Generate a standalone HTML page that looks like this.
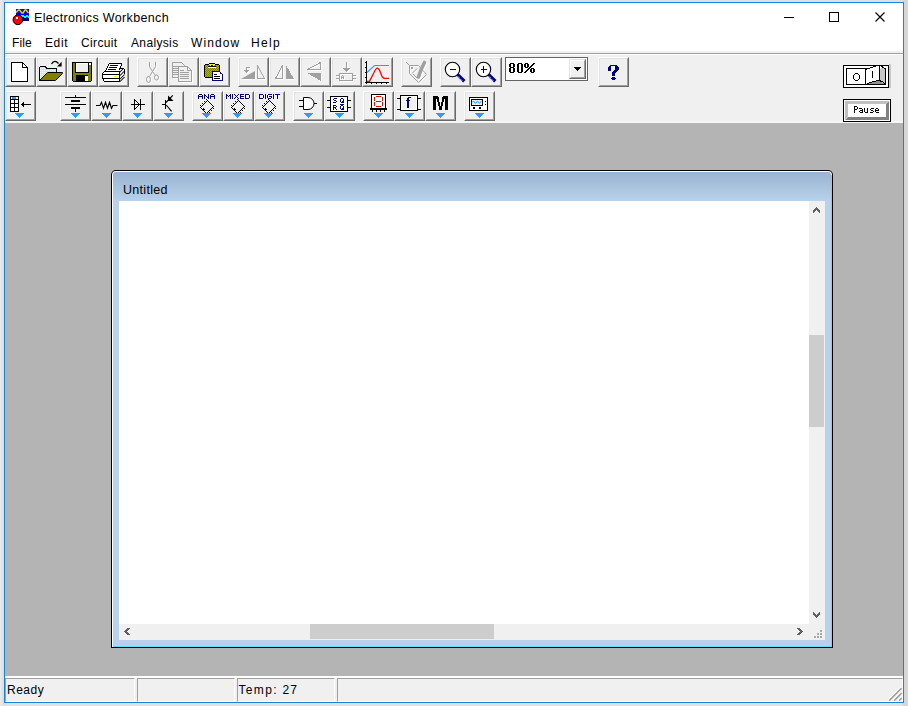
<!DOCTYPE html>
<html><head><meta charset="utf-8">
<style>
*{box-sizing:border-box}
html,body{margin:0;padding:0}
body{width:908px;height:706px;position:relative;overflow:hidden;background:#e4e4e4;font-family:"Liberation Sans",sans-serif;color:#000}
.a{position:absolute}
.t{position:absolute;white-space:pre;font-size:12px;line-height:14px}
.btn{position:absolute;width:31px;height:30px;background:#f0f0f0;border-top:1px solid #fff;border-left:1px solid #fff;border-right:1px solid #696969;border-bottom:1px solid #696969}
.btn:before{content:"";position:absolute;left:0;top:0;right:0;bottom:0;border-top:1px solid #e3e3e3;border-left:1px solid #e3e3e3;border-right:1px solid #a0a0a0;border-bottom:1px solid #a0a0a0}
.btn svg{position:absolute;left:-1px;top:-1px}
.tri{position:absolute;width:0;height:0;border-left:5px solid transparent;border-right:5px solid transparent;border-top:6px solid #3399ff}
</style></head><body>
<!-- outer shadow -->
<div class="a" style="left:0;top:0;width:908px;height:706px;background:linear-gradient(90deg,#ececec 0,#dcdcdc 4px,#e0e0e0 6px,#e0e0e0 902px,#d6d6d6 904px,#d8d8d8 908px)"></div>
<!-- window -->
<div class="a" style="left:4px;top:2px;width:900px;height:701px;border:1px solid #1883d7;background:#f0f0f0"></div>
<!-- title bar + menu -->
<div class="a" style="left:5px;top:3px;width:898px;height:48px;background:#fff"></div>
<div class="a" style="left:5px;top:51px;width:898px;height:2px;background:#f0f0f0"></div>
<div class="a" style="left:5px;top:53px;width:898px;height:1px;background:#a0a0a0"></div>
<div class="a" style="left:5px;top:54px;width:898px;height:1px;background:#fff"></div>

<div class="t" style="left:34px;top:10px;font-size:12.5px;line-height:16px;letter-spacing:0.35px">Electronics Workbench</div>

<div class="t" style="left:12px;top:36px;letter-spacing:0.1px">File</div>
<div class="t" style="left:45px;top:36px;letter-spacing:0.6px">Edit</div>
<div class="t" style="left:81px;top:36px;letter-spacing:0.35px">Circuit</div>
<div class="t" style="left:131px;top:36px;letter-spacing:0.35px">Analysis</div>
<div class="t" style="left:191px;top:36px;letter-spacing:1.1px">Window</div>
<div class="t" style="left:251px;top:36px;letter-spacing:1.3px">Help</div>

<!-- MDI area -->
<div class="a" style="left:5px;top:121px;width:898px;height:2px;background:#f6f6f6"></div>
<div class="a" style="left:5px;top:123px;width:898px;height:553px;background:#b4b4b4"></div>

<!-- app icon -->
<svg class="a" style="left:12px;top:8px" width="18" height="18" shape-rendering="crispEdges">
<rect x="4" y="1" width="13" height="12" fill="#0000ff"/>
<rect x="4" y="10" width="13" height="3" fill="#000080"/>
<path d="M4 4.5L6.5 2H7.5L10 5H11L13 2H14L16.5 5" stroke="#e0e000" stroke-width="1.4" fill="none" shape-rendering="auto"/>
<rect x="9" y="7" width="3" height="2" fill="#00ffff"/><rect x="12" y="8" width="2" height="2" fill="#00ffff"/><rect x="14" y="7" width="2" height="2" fill="#00ffff"/><rect x="16" y="8" width="1" height="2" fill="#00ffff"/>
<circle cx="5.9" cy="11.8" r="4.85" fill="#f00" stroke="#000" stroke-width="1" shape-rendering="auto"/>
<rect x="4" y="9" width="2" height="2" fill="#e0ffff"/>
</svg>
<!-- power switch -->
<svg class="a" style="left:843px;top:64px" width="48" height="24" shape-rendering="crispEdges"><rect x="46" y="0" width="2" height="24" fill="#c8c8c8"/><rect x="0" y="1" width="46" height="23" fill="#000"/><rect x="1" y="2" width="44" height="21" fill="#fff"/><rect x="3" y="4" width="40" height="17" fill="#000"/><rect x="4" y="5" width="38" height="15" fill="#fff"/><rect x="12" y="9" width="3" height="1" fill="#000"/><rect x="12" y="16" width="3" height="1" fill="#000"/><rect x="10" y="11" width="1" height="4" fill="#000"/><rect x="16" y="11" width="1" height="4" fill="#000"/><rect x="11" y="10" width="1" height="1" fill="#000"/><rect x="15" y="10" width="1" height="1" fill="#000"/><rect x="11" y="15" width="1" height="1" fill="#000"/><rect x="15" y="15" width="1" height="1" fill="#000"/><rect x="22" y="5" width="1" height="16" fill="#000"/><rect x="23" y="5" width="1" height="1" fill="#000"/><rect x="27" y="4" width="10" height="1" fill="#fff"/><rect x="30" y="3" width="7" height="1" fill="#fff"/><rect x="33" y="2" width="4" height="1" fill="#fff"/><rect x="24" y="4" width="3" height="1" fill="#000"/><rect x="27" y="3" width="3" height="1" fill="#000"/><rect x="30" y="2" width="3" height="1" fill="#000"/><rect x="36" y="1" width="1" height="16" fill="#000"/><rect x="29" y="7" width="1" height="7" fill="#000"/><path d="M37 2L42 5V20L37 17Z" fill="#c8c8c8"/><rect x="37" y="2" width="5" height="2" fill="#fff"/><rect x="37" y="4" width="1" height="1" fill="#fff"/><rect x="38" y="2" width="2" height="1" fill="#000"/><rect x="39" y="3" width="2" height="1" fill="#000"/><rect x="41" y="4" width="1" height="1" fill="#000"/><rect x="42" y="4" width="1" height="17" fill="#000"/><path d="M26 19H29V18H33V17H37L42 20H26Z" fill="#909090"/><rect x="24" y="19" width="2" height="1" fill="#000"/><rect x="26" y="18" width="3" height="1" fill="#000"/><rect x="29" y="17" width="4" height="1" fill="#000"/><rect x="33" y="16" width="4" height="1" fill="#000"/><rect x="37" y="17" width="2" height="1" fill="#000"/><rect x="39" y="17" width="1" height="1" fill="#000"/><rect x="40" y="18" width="1" height="1" fill="#000"/><rect x="41" y="19" width="1" height="1" fill="#000"/><rect x="37" y="16" width="1" height="1" fill="#000"/></svg>
<!-- pause button -->
<svg class="a" style="left:843px;top:99px" width="48" height="23" shape-rendering="crispEdges"><rect x="0" y="0" width="48" height="23" fill="#000"/><rect x="1" y="1" width="46" height="21" fill="#fff"/><path d="M2 2H46L43 5H5V18L2 21Z" fill="#c0c0c0"/><path d="M46 2V21H2L5 18H43V5Z" fill="#808080"/><rect x="5" y="5" width="38" height="13" fill="#fff"/></svg>
<svg class="a" style="left:843px;top:99px" width="48" height="23" shape-rendering="crispEdges" fill="#000"><rect x="11" y="7" width="1" height="1"/><rect x="12" y="7" width="1" height="1"/><rect x="13" y="7" width="1" height="1"/><rect x="11" y="8" width="1" height="1"/><rect x="14" y="8" width="1" height="1"/><rect x="11" y="9" width="1" height="1"/><rect x="14" y="9" width="1" height="1"/><rect x="11" y="10" width="1" height="1"/><rect x="12" y="10" width="1" height="1"/><rect x="13" y="10" width="1" height="1"/><rect x="11" y="11" width="1" height="1"/><rect x="11" y="12" width="1" height="1"/><rect x="11" y="13" width="1" height="1"/><rect x="16" y="9" width="1" height="1"/><rect x="17" y="9" width="1" height="1"/><rect x="18" y="9" width="1" height="1"/><rect x="19" y="10" width="1" height="1"/><rect x="17" y="11" width="1" height="1"/><rect x="18" y="11" width="1" height="1"/><rect x="19" y="11" width="1" height="1"/><rect x="16" y="12" width="1" height="1"/><rect x="19" y="12" width="1" height="1"/><rect x="17" y="13" width="1" height="1"/><rect x="18" y="13" width="1" height="1"/><rect x="19" y="13" width="1" height="1"/><rect x="21" y="9" width="1" height="1"/><rect x="24" y="9" width="1" height="1"/><rect x="21" y="10" width="1" height="1"/><rect x="24" y="10" width="1" height="1"/><rect x="21" y="11" width="1" height="1"/><rect x="24" y="11" width="1" height="1"/><rect x="21" y="12" width="1" height="1"/><rect x="24" y="12" width="1" height="1"/><rect x="22" y="13" width="1" height="1"/><rect x="23" y="13" width="1" height="1"/><rect x="24" y="13" width="1" height="1"/><rect x="28" y="9" width="1" height="1"/><rect x="29" y="9" width="1" height="1"/><rect x="30" y="9" width="1" height="1"/><rect x="27" y="10" width="1" height="1"/><rect x="28" y="11" width="1" height="1"/><rect x="29" y="11" width="1" height="1"/><rect x="30" y="12" width="1" height="1"/><rect x="27" y="13" width="1" height="1"/><rect x="28" y="13" width="1" height="1"/><rect x="29" y="13" width="1" height="1"/><rect x="33" y="9" width="1" height="1"/><rect x="34" y="9" width="1" height="1"/><rect x="32" y="10" width="1" height="1"/><rect x="35" y="10" width="1" height="1"/><rect x="32" y="11" width="1" height="1"/><rect x="33" y="11" width="1" height="1"/><rect x="34" y="11" width="1" height="1"/><rect x="35" y="11" width="1" height="1"/><rect x="32" y="12" width="1" height="1"/><rect x="33" y="13" width="1" height="1"/><rect x="34" y="13" width="1" height="1"/><rect x="35" y="13" width="1" height="1"/></svg>
<!-- caption buttons -->
<div class="a" style="left:784px;top:17px;width:10px;height:1px;background:#000"></div>
<div class="a" style="left:829px;top:12px;width:10px;height:10px;border:1px solid #000"></div>
<svg class="a" style="left:875px;top:12px" width="10" height="10"><path d="M0.5 0.5L9.5 9.5M9.5 0.5L0.5 9.5" stroke="#000" stroke-width="1.1"/></svg>

<div class="btn" style="left:5px;top:57px"><svg width="31" height="30" viewBox="0 0 31 30" shape-rendering="crispEdges"><path d="M6.5 5.5H17.5L22.5 10.5V24.5H6.5Z" stroke="#000" stroke-width="1" fill="none" /><rect x="7" y="6" width="10" height="18" fill="#fff"/><rect x="17" y="11" width="5" height="13" fill="#fff"/><path d="M17.5 5.5V10.5H22.5" stroke="#000" stroke-width="1" fill="none" /><rect x="18" y="7" width="1" height="3" fill="#fff"/><rect x="19" y="8" width="1" height="2" fill="#fff"/><rect x="20" y="9" width="1" height="1" fill="#fff"/></svg></div><div class="btn" style="left:36px;top:57px"><svg width="31" height="30" viewBox="0 0 31 30" shape-rendering="crispEdges"><defs><pattern id="dy" width="2" height="2" patternUnits="userSpaceOnUse"><rect width="2" height="2" fill="#fff"/><rect width="1" height="1" fill="#ff0"/><rect x="1" y="1" width="1" height="1" fill="#ff0"/></pattern></defs><path d="M4 10H9L10 12H20V16H11L4 23Z" fill="url(#dy)"/><path d="M3.5 23.5V10.5L4.5 9.5H9.5L10.5 11.5H20.5V15" stroke="#000" stroke-width="1" fill="none" /><path d="M4 23L11.5 16H26L19 23Z" fill="#808000"/><path d="M3.5 23.5H19.5L26.5 16.5V15.5H11.5L4 23" stroke="#000" fill="none" shape-rendering="auto"/><path d="M15.5 7Q18.5 2 22.5 6.5" stroke="#000" stroke-width="1.3" fill="none" shape-rendering="auto"/><path d="M21 9.6H25.6V4.8Z" fill="#000" shape-rendering="auto"/></svg></div><div class="btn" style="left:67px;top:57px"><svg width="31" height="30" viewBox="0 0 31 30" shape-rendering="crispEdges"><rect x="5" y="5" width="20" height="19" fill="#000"/><rect x="6" y="24" width="18" height="1" fill="#000"/><rect x="6" y="6" width="18" height="18" fill="#808000"/><rect x="8" y="5" width="14" height="11" fill="#000"/><rect x="9" y="6" width="12" height="9" fill="#f0f0f0"/><rect x="9" y="6" width="12" height="1" fill="#fff"/><rect x="9" y="6" width="1" height="9" fill="#fff"/><rect x="22" y="6" width="2" height="2" fill="#fff"/><rect x="9" y="18" width="12" height="6" fill="#000"/><rect x="18" y="19" width="3" height="5" fill="#fff"/></svg></div><div class="btn" style="left:98px;top:57px"><svg width="31" height="30" viewBox="0 0 31 30" shape-rendering="crispEdges"><path d="M11 6H24L21 14H6Z" fill="#fff"/><rect x="11" y="6" width="13" height="1" fill="#000"/><rect x="10" y="7" width="1" height="2" fill="#000"/><rect x="9" y="9" width="1" height="2" fill="#000"/><rect x="8" y="11" width="1" height="2" fill="#000"/><rect x="7" y="13" width="1" height="1" fill="#000"/><rect x="23" y="7" width="1" height="2" fill="#000"/><rect x="22" y="9" width="1" height="2" fill="#000"/><rect x="21" y="11" width="1" height="2" fill="#000"/><rect x="12" y="8" width="8" height="1" fill="#000"/><rect x="11" y="10" width="8" height="1" fill="#000"/><rect x="10" y="12" width="8" height="1" fill="#000"/><path d="M4 16L6 14H22L26 11V20L22 24H6V22H4Z" fill="#fff"/><rect x="6" y="14" width="16" height="1" fill="#000"/><rect x="5" y="15" width="1" height="1" fill="#000"/><rect x="4" y="16" width="1" height="6" fill="#000"/><rect x="4" y="17" width="18" height="1" fill="#000"/><rect x="4" y="21" width="18" height="1" fill="#000"/><rect x="5" y="22" width="1" height="2" fill="#000"/><rect x="6" y="24" width="16" height="1" fill="#000"/><rect x="21" y="14" width="1" height="11" fill="#000"/><rect x="22" y="11" width="4" height="1" fill="#000"/><rect x="26" y="12" width="1" height="5" fill="#000"/><path d="M21.5 15.5L25.5 11.5M21.5 19L26.5 14M21.5 22.5L26.5 17.5M22 24.5L26.5 20" stroke="#000" stroke-width="1.05" fill="none" shape-rendering="auto"/><rect x="16" y="19" width="3" height="1" fill="#ff0"/></svg></div><div class="btn" style="left:137px;top:57px"><svg width="31" height="30" viewBox="0 0 31 30" shape-rendering="crispEdges"><g transform="translate(1,1)"><path d="M12.5 5V9.5L15.5 14.5L12.5 19.5M18.5 5V9.5L15.5 14.5L18.5 18.5" stroke="#fff" stroke-width="1" fill="none" shape-rendering="auto"/><ellipse cx="11.5" cy="22.5" rx="2" ry="3" stroke="#fff" fill="none" shape-rendering="auto"/><ellipse cx="19.5" cy="20.5" rx="2" ry="2.6" stroke="#fff" fill="none" shape-rendering="auto"/></g><path d="M12.5 5V9.5L15.5 14.5L12.5 19.5M18.5 5V9.5L15.5 14.5L18.5 18.5" stroke="#a0a0a0" stroke-width="1" fill="none" shape-rendering="auto"/><ellipse cx="11.5" cy="22.5" rx="2" ry="3" stroke="#a0a0a0" fill="none" shape-rendering="auto"/><ellipse cx="19.5" cy="20.5" rx="2" ry="2.6" stroke="#a0a0a0" fill="none" shape-rendering="auto"/></svg></div><div class="btn" style="left:168px;top:57px"><svg width="31" height="30" viewBox="0 0 31 30" shape-rendering="crispEdges"><g transform="translate(1,1)"><path d="M4.5 5.5H13.5L16.5 8.5V20.5H4.5Z" stroke="#fff" stroke-width="1" fill="none" /><rect x="5" y="6" width="8" height="14" fill="#f0f0f0"/><rect x="10" y="9" width="9" height="1" fill="#f0f0f0"/><path d="M10.5 9.5H19.5L23.5 13.5V24.5H10.5Z" stroke="#fff" stroke-width="1" fill="none" /><rect x="11" y="10" width="8" height="14" fill="#f0f0f0"/><rect x="19" y="14" width="4" height="10" fill="#f0f0f0"/><path d="M19.5 9.5V13.5H23.5" stroke="#fff" stroke-width="1" fill="none" /><rect x="5" y="9" width="5" height="1" fill="#fff"/><rect x="5" y="11" width="5" height="1" fill="#fff"/><rect x="5" y="13" width="5" height="1" fill="#fff"/><rect x="5" y="15" width="5" height="1" fill="#fff"/><rect x="5" y="17" width="5" height="1" fill="#fff"/><rect x="12" y="13" width="4" height="1" fill="#fff"/><rect x="12" y="15" width="9" height="1" fill="#fff"/><rect x="12" y="17" width="9" height="1" fill="#fff"/><rect x="12" y="19" width="9" height="1" fill="#fff"/><rect x="12" y="21" width="9" height="1" fill="#fff"/></g><path d="M4.5 5.5H13.5L16.5 8.5V20.5H4.5Z" stroke="#a0a0a0" stroke-width="1" fill="none" /><rect x="5" y="6" width="8" height="14" fill="#f0f0f0"/><rect x="10" y="9" width="9" height="1" fill="#f0f0f0"/><path d="M10.5 9.5H19.5L23.5 13.5V24.5H10.5Z" stroke="#a0a0a0" stroke-width="1" fill="none" /><rect x="11" y="10" width="8" height="14" fill="#f0f0f0"/><rect x="19" y="14" width="4" height="10" fill="#f0f0f0"/><path d="M19.5 9.5V13.5H23.5" stroke="#a0a0a0" stroke-width="1" fill="none" /><rect x="5" y="9" width="5" height="1" fill="#a0a0a0"/><rect x="5" y="11" width="5" height="1" fill="#a0a0a0"/><rect x="5" y="13" width="5" height="1" fill="#a0a0a0"/><rect x="5" y="15" width="5" height="1" fill="#a0a0a0"/><rect x="5" y="17" width="5" height="1" fill="#a0a0a0"/><rect x="12" y="13" width="4" height="1" fill="#a0a0a0"/><rect x="12" y="15" width="9" height="1" fill="#a0a0a0"/><rect x="12" y="17" width="9" height="1" fill="#a0a0a0"/><rect x="12" y="19" width="9" height="1" fill="#a0a0a0"/><rect x="12" y="21" width="9" height="1" fill="#a0a0a0"/></svg></div><div class="btn" style="left:199px;top:57px"><svg width="31" height="30" viewBox="0 0 31 30" shape-rendering="crispEdges"><defs><pattern id="dol" width="2" height="2" patternUnits="userSpaceOnUse"><rect width="2" height="2" fill="#a0a0a0"/><rect width="1" height="1" fill="#808000"/><rect x="1" y="1" width="1" height="1" fill="#808000"/></pattern></defs><rect x="6" y="8" width="14" height="12" fill="url(#dol)"/><path d="M5.5 8.5V19.5L6.5 20.5H19.5L20.5 19.5V8.5L19.5 7.5H16.5L15.5 6.5H10.5L9.5 7.5H6.5Z" stroke="#000" stroke-width="1" fill="none" /><rect x="9" y="9" width="8" height="1" fill="#000"/><rect x="9" y="10" width="8" height="1" fill="#fff"/><rect x="11" y="7" width="4" height="2" fill="#ff0"/><rect x="12" y="8" width="2" height="1" fill="#000"/><rect x="14" y="15" width="9" height="8" fill="#fff"/><path d="M13.5 14.5H20.5L23.5 17.5V23.5H13.5Z" stroke="#000080" stroke-width="1" fill="none" /><rect x="21" y="16" width="1" height="1" fill="#000080"/><rect x="15" y="17" width="3" height="1" fill="#000"/><rect x="15" y="19" width="6" height="1" fill="#000"/><rect x="15" y="21" width="6" height="1" fill="#000"/></svg></div><div class="btn" style="left:238px;top:57px"><svg width="31" height="30" viewBox="0 0 31 30" shape-rendering="crispEdges"><g transform="translate(1,1)"><path d="M3 22L17 14V22Z" fill="#fff" shape-rendering="auto"/><rect x="19" y="8" width="1" height="14" fill="#fff"/><rect x="19" y="21" width="8" height="1" fill="#fff"/><path d="M19.5 8.5L26.5 21.5" stroke="#fff" fill="none" shape-rendering="auto"/><rect x="9" y="10" width="3" height="1" fill="#fff"/><rect x="8" y="10" width="1" height="5" fill="#fff"/><rect x="6" y="13" width="5" height="1" fill="#fff"/><rect x="7" y="14" width="3" height="1" fill="#fff"/><rect x="8" y="15" width="1" height="1" fill="#fff"/></g><path d="M3 22L17 14V22Z" fill="#a0a0a0" shape-rendering="auto"/><rect x="19" y="8" width="1" height="14" fill="#a0a0a0"/><rect x="19" y="21" width="8" height="1" fill="#a0a0a0"/><path d="M19.5 8.5L26.5 21.5" stroke="#a0a0a0" fill="none" shape-rendering="auto"/><rect x="9" y="10" width="3" height="1" fill="#a0a0a0"/><rect x="8" y="10" width="1" height="5" fill="#a0a0a0"/><rect x="6" y="13" width="5" height="1" fill="#a0a0a0"/><rect x="7" y="14" width="3" height="1" fill="#a0a0a0"/><rect x="8" y="15" width="1" height="1" fill="#a0a0a0"/></svg></div><div class="btn" style="left:269px;top:57px"><svg width="31" height="30" viewBox="0 0 31 30" shape-rendering="crispEdges"><g transform="translate(1,1)"><path d="M13.5 8.5V21.5H6.5Z" stroke="#fff" stroke-width="1" fill="none" /><path d="M17 8V22H25Z" fill="#fff"/></g><path d="M13.5 8.5V21.5H6.5Z" stroke="#a0a0a0" stroke-width="1" fill="none" /><path d="M17 8V22H25Z" fill="#a0a0a0"/></svg></div><div class="btn" style="left:300px;top:57px"><svg width="31" height="30" viewBox="0 0 31 30" shape-rendering="crispEdges"><g transform="translate(1,1)"><path d="M20.5 5.5V12.5H7.5Z" stroke="#fff" stroke-width="1" fill="none" /><path d="M7 16H21V24Z" fill="#fff"/></g><path d="M20.5 5.5V12.5H7.5Z" stroke="#a0a0a0" stroke-width="1" fill="none" /><path d="M7 16H21V24Z" fill="#a0a0a0"/></svg></div><div class="btn" style="left:331px;top:57px"><svg width="31" height="30" viewBox="0 0 31 30" shape-rendering="crispEdges"><g transform="translate(1,1)"><rect x="15" y="5" width="1" height="9" fill="#fff"/><rect x="12" y="11" width="7" height="1" fill="#fff"/><rect x="13" y="12" width="5" height="1" fill="#fff"/><rect x="14" y="13" width="3" height="1" fill="#fff"/><rect x="15" y="14" width="1" height="1" fill="#fff"/><path d="M8.5 16.5H21.5V23.5H8.5Z" stroke="#fff" stroke-width="1" fill="none" /><rect x="5" y="18" width="3" height="1" fill="#fff"/><rect x="5" y="21" width="3" height="1" fill="#fff"/><rect x="22" y="18" width="3" height="1" fill="#fff"/><rect x="22" y="21" width="3" height="1" fill="#fff"/><rect x="11" y="18" width="1" height="1" fill="#fff"/><rect x="10" y="19" width="1" height="1" fill="#fff"/><rect x="12" y="19" width="1" height="1" fill="#fff"/><rect x="10" y="20" width="3" height="1" fill="#fff"/><rect x="10" y="21" width="1" height="1" fill="#fff"/><rect x="12" y="21" width="1" height="1" fill="#fff"/></g><rect x="15" y="5" width="1" height="9" fill="#a0a0a0"/><rect x="12" y="11" width="7" height="1" fill="#a0a0a0"/><rect x="13" y="12" width="5" height="1" fill="#a0a0a0"/><rect x="14" y="13" width="3" height="1" fill="#a0a0a0"/><rect x="15" y="14" width="1" height="1" fill="#a0a0a0"/><path d="M8.5 16.5H21.5V23.5H8.5Z" stroke="#a0a0a0" stroke-width="1" fill="none" /><rect x="5" y="18" width="3" height="1" fill="#a0a0a0"/><rect x="5" y="21" width="3" height="1" fill="#a0a0a0"/><rect x="22" y="18" width="3" height="1" fill="#a0a0a0"/><rect x="22" y="21" width="3" height="1" fill="#a0a0a0"/><rect x="11" y="18" width="1" height="1" fill="#a0a0a0"/><rect x="10" y="19" width="1" height="1" fill="#a0a0a0"/><rect x="12" y="19" width="1" height="1" fill="#a0a0a0"/><rect x="10" y="20" width="3" height="1" fill="#a0a0a0"/><rect x="10" y="21" width="1" height="1" fill="#a0a0a0"/><rect x="12" y="21" width="1" height="1" fill="#a0a0a0"/></svg></div><div class="btn" style="left:362px;top:57px"><svg width="31" height="30" viewBox="0 0 31 30" shape-rendering="crispEdges"><rect x="4" y="4" width="1" height="22" fill="#000"/><rect x="4" y="25" width="23" height="1" fill="#000"/><rect x="3" y="5" width="1" height="1" fill="#000"/><rect x="3" y="10" width="1" height="1" fill="#000"/><rect x="3" y="15" width="1" height="1" fill="#000"/><rect x="3" y="20" width="1" height="1" fill="#000"/><rect x="3" y="25" width="1" height="1" fill="#000"/><rect x="4" y="26" width="1" height="1" fill="#000"/><rect x="9" y="26" width="1" height="1" fill="#000"/><rect x="14" y="26" width="1" height="1" fill="#000"/><rect x="19" y="26" width="1" height="1" fill="#000"/><rect x="24" y="26" width="1" height="1" fill="#000"/><path d="M5 15.5L12.5 8.5H27" stroke="#3399ff" stroke-width="1.1" fill="none" shape-rendering="auto"/><path d="M5 24.4H7.5L12 15.5Q14 11 15.5 11.2Q17 11.4 18.5 15.5Q20.2 21.3 22.5 21.3H27" stroke="#f00" stroke-width="1.3" fill="none" shape-rendering="auto"/></svg></div><div class="btn" style="left:401px;top:57px"><svg width="31" height="30" viewBox="0 0 31 30" shape-rendering="crispEdges"><g transform="translate(1,1)"><path d="M8.5 8.5H17.5L25.5 17.5L17.5 25.5L8.5 16.5Z" stroke="#fff" stroke-width="1" fill="none" shape-rendering="auto"/><path d="M5 5L8.5 8.5" stroke="#fff" stroke-width="1" fill="none" shape-rendering="auto"/><rect x="10" y="10" width="2" height="2" fill="#fff"/><path d="M11 16.5L16 11.5M12 17L16.5 21.5" stroke="#fff" stroke-width="1" fill="none" shape-rendering="auto"/><path d="M17.5 20Q19.5 13 23.5 5.5" stroke="#fff" stroke-width="3.6" stroke-linecap="round" fill="none" shape-rendering="auto"/></g><path d="M8.5 8.5H17.5L25.5 17.5L17.5 25.5L8.5 16.5Z" stroke="#a0a0a0" stroke-width="1" fill="none" shape-rendering="auto"/><path d="M5 5L8.5 8.5" stroke="#a0a0a0" stroke-width="1" fill="none" shape-rendering="auto"/><rect x="10" y="10" width="2" height="2" fill="#a0a0a0"/><path d="M11 16.5L16 11.5M12 17L16.5 21.5" stroke="#a0a0a0" stroke-width="1" fill="none" shape-rendering="auto"/><path d="M17.5 20Q19.5 13 23.5 5.5" stroke="#a0a0a0" stroke-width="3.6" stroke-linecap="round" fill="none" shape-rendering="auto"/></svg></div><div class="btn" style="left:440px;top:57px"><svg width="31" height="30" viewBox="0 0 31 30" shape-rendering="crispEdges"><circle cx="12.5" cy="12.5" r="7.2" fill="#fff" stroke="#000" stroke-width="1.1" shape-rendering="auto"/><path d="M17.6 17.6L24.3 24.3" stroke="#000080" stroke-width="3.4" shape-rendering="auto"/><path d="M17.4 19L22.4 24" stroke="#fff" stroke-width="0.9" stroke-dasharray="1 0.45" shape-rendering="auto"/><rect x="10" y="12" width="6" height="1" fill="#000080"/></svg></div><div class="btn" style="left:471px;top:57px"><svg width="31" height="30" viewBox="0 0 31 30" shape-rendering="crispEdges"><circle cx="12.5" cy="12.5" r="7.2" fill="#fff" stroke="#000" stroke-width="1.1" shape-rendering="auto"/><path d="M17.6 17.6L24.3 24.3" stroke="#000080" stroke-width="3.4" shape-rendering="auto"/><path d="M17.4 19L22.4 24" stroke="#fff" stroke-width="0.9" stroke-dasharray="1 0.45" shape-rendering="auto"/><rect x="10" y="12" width="6" height="1" fill="#000080"/><rect x="12" y="9" width="1" height="7" fill="#000080"/></svg></div><div class="btn" style="left:598px;top:57px"><svg width="31" height="30" viewBox="0 0 31 30" shape-rendering="crispEdges"><rect x="12" y="8" width="7" height="1" fill="#000080"/><rect x="11" y="9" width="2" height="1" fill="#000080"/><rect x="17" y="9" width="3" height="1" fill="#000080"/><rect x="10" y="10" width="3" height="1" fill="#000080"/><rect x="17" y="10" width="4" height="1" fill="#000080"/><rect x="10" y="11" width="3" height="1" fill="#000080"/><rect x="17" y="11" width="4" height="1" fill="#000080"/><rect x="10" y="12" width="3" height="1" fill="#000080"/><rect x="17" y="12" width="4" height="1" fill="#000080"/><rect x="10" y="13" width="3" height="1" fill="#000080"/><rect x="16" y="13" width="4" height="1" fill="#000080"/><rect x="15" y="14" width="4" height="1" fill="#000080"/><rect x="14" y="15" width="4" height="1" fill="#000080"/><rect x="14" y="16" width="3" height="1" fill="#000080"/><rect x="14" y="17" width="3" height="1" fill="#000080"/><rect x="14" y="18" width="3" height="1" fill="#000080"/><rect x="14" y="20" width="3" height="1" fill="#000080"/><rect x="13" y="21" width="5" height="1" fill="#000080"/><rect x="14" y="22" width="3" height="1" fill="#000080"/></svg></div><div class="btn" style="left:5px;top:91px"><svg width="31" height="30" viewBox="0 0 31 30" shape-rendering="crispEdges"><rect x="5" y="5" width="9" height="16" fill="#000"/><rect x="6" y="6" width="7" height="14" fill="#fff"/><rect x="7" y="6" width="4" height="2" fill="#3399ff"/><rect x="6" y="8" width="7" height="1" fill="#000"/><rect x="9" y="8" width="1" height="12" fill="#000"/><rect x="6" y="12" width="7" height="1" fill="#000"/><rect x="6" y="16" width="7" height="1" fill="#000"/><rect x="16" y="13" width="10" height="1" fill="#000"/><rect x="17" y="12" width="2" height="3" fill="#000"/><rect x="18" y="11" width="1" height="5" fill="#000"/></svg><svg width="31" height="30" viewBox="0 0 31 30" shape-rendering="crispEdges" fill="#3399ff"><rect x="10" y="22" width="9" height="1"/><rect x="11" y="23" width="7" height="1"/><rect x="12" y="24" width="5" height="1"/><rect x="13" y="25" width="3" height="1"/><rect x="14" y="26" width="1" height="1"/></svg></div><div class="btn" style="left:60px;top:91px"><svg width="31" height="30" viewBox="0 0 31 30" shape-rendering="crispEdges"><rect x="15" y="4" width="1" height="2" fill="#000"/><rect x="5" y="6" width="21" height="1" fill="#000"/><rect x="11" y="9" width="9" height="2" fill="#000"/><rect x="5" y="13" width="21" height="1" fill="#000"/><rect x="11" y="16" width="9" height="2" fill="#000"/><rect x="15" y="18" width="1" height="3" fill="#000"/></svg><svg width="31" height="30" viewBox="0 0 31 30" shape-rendering="crispEdges" fill="#3399ff"><rect x="11" y="22" width="9" height="1"/><rect x="12" y="23" width="7" height="1"/><rect x="13" y="24" width="5" height="1"/><rect x="14" y="25" width="3" height="1"/><rect x="15" y="26" width="1" height="1"/></svg></div><div class="btn" style="left:91px;top:91px"><svg width="31" height="30" viewBox="0 0 31 30" shape-rendering="crispEdges"><path d="M5 14.5H9L10.5 11.3L12.5 17.3L14.5 11.3L16.5 17.3L18.5 11.3L20.5 17.3L22 14.5H26.5" stroke="#000" stroke-width="1.15" fill="none" shape-rendering="auto"/></svg><svg width="31" height="30" viewBox="0 0 31 30" shape-rendering="crispEdges" fill="#3399ff"><rect x="11" y="22" width="9" height="1"/><rect x="12" y="23" width="7" height="1"/><rect x="13" y="24" width="5" height="1"/><rect x="14" y="25" width="3" height="1"/><rect x="15" y="26" width="1" height="1"/></svg></div><div class="btn" style="left:122px;top:91px"><svg width="31" height="30" viewBox="0 0 31 30" shape-rendering="crispEdges"><rect x="9" y="13" width="14" height="1" fill="#000"/><path d="M12.5 8.5V18.5L17.5 13.5Z" stroke="#000" fill="none" shape-rendering="auto"/><rect x="18" y="8" width="1" height="11" fill="#000"/><rect x="12" y="8" width="1" height="11" fill="#000"/></svg><svg width="31" height="30" viewBox="0 0 31 30" shape-rendering="crispEdges" fill="#3399ff"><rect x="11" y="22" width="9" height="1"/><rect x="12" y="23" width="7" height="1"/><rect x="13" y="24" width="5" height="1"/><rect x="14" y="25" width="3" height="1"/><rect x="15" y="26" width="1" height="1"/></svg></div><div class="btn" style="left:153px;top:91px"><svg width="31" height="30" viewBox="0 0 31 30" shape-rendering="crispEdges"><rect x="9" y="13" width="4" height="1" fill="#000"/><rect x="12" y="9" width="1" height="9" fill="#000"/><path d="M13 11.5L19.8 4.3M13.2 14L18.6 20.3" stroke="#000" stroke-width="1.1" fill="none" shape-rendering="auto"/><path d="M15 4.6V10H20.6Z" fill="#000" shape-rendering="auto"/></svg><svg width="31" height="30" viewBox="0 0 31 30" shape-rendering="crispEdges" fill="#3399ff"><rect x="11" y="22" width="9" height="1"/><rect x="12" y="23" width="7" height="1"/><rect x="13" y="24" width="5" height="1"/><rect x="14" y="25" width="3" height="1"/><rect x="15" y="26" width="1" height="1"/></svg></div><div class="btn" style="left:192px;top:91px"><svg width="31" height="30" viewBox="0 0 31 30" shape-rendering="crispEdges"><rect x="7" y="3" width="3" height="1" fill="#000080"/><rect x="6" y="4" width="1" height="1" fill="#000080"/><rect x="10" y="4" width="1" height="1" fill="#000080"/><rect x="6" y="5" width="5" height="1" fill="#000080"/><rect x="6" y="6" width="1" height="1" fill="#000080"/><rect x="10" y="6" width="1" height="1" fill="#000080"/><rect x="6" y="7" width="1" height="1" fill="#000080"/><rect x="10" y="7" width="1" height="1" fill="#000080"/><rect x="12" y="3" width="1" height="1" fill="#000080"/><rect x="16" y="3" width="1" height="1" fill="#000080"/><rect x="12" y="4" width="2" height="1" fill="#000080"/><rect x="16" y="4" width="1" height="1" fill="#000080"/><rect x="12" y="5" width="1" height="1" fill="#000080"/><rect x="14" y="5" width="1" height="1" fill="#000080"/><rect x="16" y="5" width="1" height="1" fill="#000080"/><rect x="12" y="6" width="1" height="1" fill="#000080"/><rect x="15" y="6" width="2" height="1" fill="#000080"/><rect x="12" y="7" width="1" height="1" fill="#000080"/><rect x="16" y="7" width="1" height="1" fill="#000080"/><rect x="19" y="3" width="3" height="1" fill="#000080"/><rect x="18" y="4" width="1" height="1" fill="#000080"/><rect x="22" y="4" width="1" height="1" fill="#000080"/><rect x="18" y="5" width="5" height="1" fill="#000080"/><rect x="18" y="6" width="1" height="1" fill="#000080"/><rect x="22" y="6" width="1" height="1" fill="#000080"/><rect x="18" y="7" width="1" height="1" fill="#000080"/><rect x="22" y="7" width="1" height="1" fill="#000080"/><path d="M8.5 16.5L15.5 9.5L21.5 15.5L14.5 22.5Z" fill="#f0f0f0"/><rect x="8" y="14" width="1" height="1" fill="#000"/><rect x="8" y="16" width="1" height="1" fill="#000"/><rect x="9" y="15" width="1" height="1" fill="#000"/><rect x="9" y="17" width="1" height="1" fill="#000"/><rect x="10" y="12" width="1" height="1" fill="#000"/><rect x="10" y="14" width="1" height="1" fill="#000"/><rect x="10" y="18" width="1" height="1" fill="#000"/><rect x="11" y="13" width="1" height="1" fill="#000"/><rect x="11" y="17" width="1" height="1" fill="#000"/><rect x="11" y="18" width="1" height="1" fill="#000"/><rect x="11" y="19" width="1" height="1" fill="#000"/><rect x="12" y="10" width="1" height="1" fill="#000"/><rect x="12" y="12" width="1" height="1" fill="#000"/><rect x="12" y="18" width="1" height="1" fill="#000"/><rect x="12" y="20" width="1" height="1" fill="#000"/><rect x="13" y="11" width="1" height="1" fill="#000"/><rect x="13" y="21" width="1" height="1" fill="#000"/><rect x="14" y="8" width="1" height="1" fill="#000"/><rect x="14" y="10" width="1" height="1" fill="#000"/><rect x="14" y="22" width="1" height="1" fill="#000"/><rect x="15" y="9" width="1" height="1" fill="#000"/><rect x="15" y="21" width="1" height="1" fill="#000"/><rect x="16" y="10" width="1" height="1" fill="#000"/><rect x="16" y="20" width="1" height="1" fill="#000"/><rect x="17" y="11" width="1" height="1" fill="#000"/><rect x="17" y="19" width="1" height="1" fill="#000"/><rect x="17" y="21" width="1" height="1" fill="#000"/><rect x="18" y="12" width="1" height="1" fill="#000"/><rect x="18" y="18" width="1" height="1" fill="#000"/><rect x="19" y="13" width="1" height="1" fill="#000"/><rect x="19" y="17" width="1" height="1" fill="#000"/><rect x="19" y="19" width="1" height="1" fill="#000"/><rect x="20" y="14" width="1" height="1" fill="#000"/><rect x="20" y="16" width="1" height="1" fill="#000"/><rect x="21" y="15" width="1" height="1" fill="#000"/><rect x="21" y="17" width="1" height="1" fill="#000"/></svg><svg width="31" height="30" viewBox="0 0 31 30" shape-rendering="crispEdges" fill="#3399ff"><rect x="10" y="22" width="9" height="1"/><rect x="11" y="23" width="7" height="1"/><rect x="12" y="24" width="5" height="1"/><rect x="13" y="25" width="3" height="1"/><rect x="14" y="26" width="1" height="1"/></svg></div><div class="btn" style="left:223px;top:91px"><svg width="31" height="30" viewBox="0 0 31 30" shape-rendering="crispEdges"><rect x="3" y="3" width="1" height="1" fill="#000080"/><rect x="7" y="3" width="1" height="1" fill="#000080"/><rect x="3" y="4" width="2" height="1" fill="#000080"/><rect x="6" y="4" width="2" height="1" fill="#000080"/><rect x="3" y="5" width="1" height="1" fill="#000080"/><rect x="5" y="5" width="1" height="1" fill="#000080"/><rect x="7" y="5" width="1" height="1" fill="#000080"/><rect x="3" y="6" width="1" height="1" fill="#000080"/><rect x="7" y="6" width="1" height="1" fill="#000080"/><rect x="3" y="7" width="1" height="1" fill="#000080"/><rect x="7" y="7" width="1" height="1" fill="#000080"/><rect x="9" y="3" width="1" height="1" fill="#000080"/><rect x="9" y="4" width="1" height="1" fill="#000080"/><rect x="9" y="5" width="1" height="1" fill="#000080"/><rect x="9" y="6" width="1" height="1" fill="#000080"/><rect x="9" y="7" width="1" height="1" fill="#000080"/><rect x="11" y="3" width="1" height="1" fill="#000080"/><rect x="15" y="3" width="1" height="1" fill="#000080"/><rect x="12" y="4" width="1" height="1" fill="#000080"/><rect x="14" y="4" width="1" height="1" fill="#000080"/><rect x="13" y="5" width="1" height="1" fill="#000080"/><rect x="12" y="6" width="1" height="1" fill="#000080"/><rect x="14" y="6" width="1" height="1" fill="#000080"/><rect x="11" y="7" width="1" height="1" fill="#000080"/><rect x="15" y="7" width="1" height="1" fill="#000080"/><rect x="17" y="3" width="4" height="1" fill="#000080"/><rect x="17" y="4" width="1" height="1" fill="#000080"/><rect x="17" y="5" width="4" height="1" fill="#000080"/><rect x="17" y="6" width="1" height="1" fill="#000080"/><rect x="17" y="7" width="4" height="1" fill="#000080"/><rect x="22" y="3" width="4" height="1" fill="#000080"/><rect x="22" y="4" width="1" height="1" fill="#000080"/><rect x="26" y="4" width="1" height="1" fill="#000080"/><rect x="22" y="5" width="1" height="1" fill="#000080"/><rect x="26" y="5" width="1" height="1" fill="#000080"/><rect x="22" y="6" width="1" height="1" fill="#000080"/><rect x="26" y="6" width="1" height="1" fill="#000080"/><rect x="22" y="7" width="4" height="1" fill="#000080"/><path d="M8.5 16.5L15.5 9.5L21.5 15.5L14.5 22.5Z" fill="#f0f0f0"/><rect x="8" y="14" width="1" height="1" fill="#000"/><rect x="8" y="16" width="1" height="1" fill="#000"/><rect x="9" y="15" width="1" height="1" fill="#000"/><rect x="9" y="17" width="1" height="1" fill="#000"/><rect x="10" y="12" width="1" height="1" fill="#000"/><rect x="10" y="14" width="1" height="1" fill="#000"/><rect x="10" y="18" width="1" height="1" fill="#000"/><rect x="11" y="13" width="1" height="1" fill="#000"/><rect x="11" y="17" width="1" height="1" fill="#000"/><rect x="11" y="18" width="1" height="1" fill="#000"/><rect x="11" y="19" width="1" height="1" fill="#000"/><rect x="12" y="10" width="1" height="1" fill="#000"/><rect x="12" y="12" width="1" height="1" fill="#000"/><rect x="12" y="18" width="1" height="1" fill="#000"/><rect x="12" y="20" width="1" height="1" fill="#000"/><rect x="13" y="11" width="1" height="1" fill="#000"/><rect x="13" y="21" width="1" height="1" fill="#000"/><rect x="14" y="8" width="1" height="1" fill="#000"/><rect x="14" y="10" width="1" height="1" fill="#000"/><rect x="14" y="22" width="1" height="1" fill="#000"/><rect x="15" y="9" width="1" height="1" fill="#000"/><rect x="15" y="21" width="1" height="1" fill="#000"/><rect x="16" y="10" width="1" height="1" fill="#000"/><rect x="16" y="20" width="1" height="1" fill="#000"/><rect x="17" y="11" width="1" height="1" fill="#000"/><rect x="17" y="19" width="1" height="1" fill="#000"/><rect x="17" y="21" width="1" height="1" fill="#000"/><rect x="18" y="12" width="1" height="1" fill="#000"/><rect x="18" y="18" width="1" height="1" fill="#000"/><rect x="19" y="13" width="1" height="1" fill="#000"/><rect x="19" y="17" width="1" height="1" fill="#000"/><rect x="19" y="19" width="1" height="1" fill="#000"/><rect x="20" y="14" width="1" height="1" fill="#000"/><rect x="20" y="16" width="1" height="1" fill="#000"/><rect x="21" y="15" width="1" height="1" fill="#000"/><rect x="21" y="17" width="1" height="1" fill="#000"/></svg><svg width="31" height="30" viewBox="0 0 31 30" shape-rendering="crispEdges" fill="#3399ff"><rect x="10" y="22" width="9" height="1"/><rect x="11" y="23" width="7" height="1"/><rect x="12" y="24" width="5" height="1"/><rect x="13" y="25" width="3" height="1"/><rect x="14" y="26" width="1" height="1"/></svg></div><div class="btn" style="left:254px;top:91px"><svg width="31" height="30" viewBox="0 0 31 30" shape-rendering="crispEdges"><rect x="5" y="3" width="4" height="1" fill="#000080"/><rect x="5" y="4" width="1" height="1" fill="#000080"/><rect x="9" y="4" width="1" height="1" fill="#000080"/><rect x="5" y="5" width="1" height="1" fill="#000080"/><rect x="9" y="5" width="1" height="1" fill="#000080"/><rect x="5" y="6" width="1" height="1" fill="#000080"/><rect x="9" y="6" width="1" height="1" fill="#000080"/><rect x="5" y="7" width="4" height="1" fill="#000080"/><rect x="11" y="3" width="1" height="1" fill="#000080"/><rect x="11" y="4" width="1" height="1" fill="#000080"/><rect x="11" y="5" width="1" height="1" fill="#000080"/><rect x="11" y="6" width="1" height="1" fill="#000080"/><rect x="11" y="7" width="1" height="1" fill="#000080"/><rect x="14" y="3" width="4" height="1" fill="#000080"/><rect x="13" y="4" width="1" height="1" fill="#000080"/><rect x="13" y="5" width="1" height="1" fill="#000080"/><rect x="15" y="5" width="3" height="1" fill="#000080"/><rect x="13" y="6" width="1" height="1" fill="#000080"/><rect x="17" y="6" width="1" height="1" fill="#000080"/><rect x="14" y="7" width="3" height="1" fill="#000080"/><rect x="19" y="3" width="1" height="1" fill="#000080"/><rect x="19" y="4" width="1" height="1" fill="#000080"/><rect x="19" y="5" width="1" height="1" fill="#000080"/><rect x="19" y="6" width="1" height="1" fill="#000080"/><rect x="19" y="7" width="1" height="1" fill="#000080"/><rect x="21" y="3" width="5" height="1" fill="#000080"/><rect x="23" y="4" width="1" height="1" fill="#000080"/><rect x="23" y="5" width="1" height="1" fill="#000080"/><rect x="23" y="6" width="1" height="1" fill="#000080"/><rect x="23" y="7" width="1" height="1" fill="#000080"/><path d="M8.5 16.5L15.5 9.5L21.5 15.5L14.5 22.5Z" fill="#f0f0f0"/><rect x="8" y="14" width="1" height="1" fill="#000"/><rect x="8" y="16" width="1" height="1" fill="#000"/><rect x="9" y="15" width="1" height="1" fill="#000"/><rect x="9" y="17" width="1" height="1" fill="#000"/><rect x="10" y="12" width="1" height="1" fill="#000"/><rect x="10" y="14" width="1" height="1" fill="#000"/><rect x="10" y="18" width="1" height="1" fill="#000"/><rect x="11" y="13" width="1" height="1" fill="#000"/><rect x="11" y="17" width="1" height="1" fill="#000"/><rect x="11" y="18" width="1" height="1" fill="#000"/><rect x="11" y="19" width="1" height="1" fill="#000"/><rect x="12" y="10" width="1" height="1" fill="#000"/><rect x="12" y="12" width="1" height="1" fill="#000"/><rect x="12" y="18" width="1" height="1" fill="#000"/><rect x="12" y="20" width="1" height="1" fill="#000"/><rect x="13" y="11" width="1" height="1" fill="#000"/><rect x="13" y="21" width="1" height="1" fill="#000"/><rect x="14" y="8" width="1" height="1" fill="#000"/><rect x="14" y="10" width="1" height="1" fill="#000"/><rect x="14" y="22" width="1" height="1" fill="#000"/><rect x="15" y="9" width="1" height="1" fill="#000"/><rect x="15" y="21" width="1" height="1" fill="#000"/><rect x="16" y="10" width="1" height="1" fill="#000"/><rect x="16" y="20" width="1" height="1" fill="#000"/><rect x="17" y="11" width="1" height="1" fill="#000"/><rect x="17" y="19" width="1" height="1" fill="#000"/><rect x="17" y="21" width="1" height="1" fill="#000"/><rect x="18" y="12" width="1" height="1" fill="#000"/><rect x="18" y="18" width="1" height="1" fill="#000"/><rect x="19" y="13" width="1" height="1" fill="#000"/><rect x="19" y="17" width="1" height="1" fill="#000"/><rect x="19" y="19" width="1" height="1" fill="#000"/><rect x="20" y="14" width="1" height="1" fill="#000"/><rect x="20" y="16" width="1" height="1" fill="#000"/><rect x="21" y="15" width="1" height="1" fill="#000"/><rect x="21" y="17" width="1" height="1" fill="#000"/></svg><svg width="31" height="30" viewBox="0 0 31 30" shape-rendering="crispEdges" fill="#3399ff"><rect x="10" y="22" width="9" height="1"/><rect x="11" y="23" width="7" height="1"/><rect x="12" y="24" width="5" height="1"/><rect x="13" y="25" width="3" height="1"/><rect x="14" y="26" width="1" height="1"/></svg></div><div class="btn" style="left:293px;top:91px"><svg width="31" height="30" viewBox="0 0 31 30" shape-rendering="crispEdges"><path d="M10.5 6.5H15A6 6 0 0 1 15 18.5H10.5Z" stroke="#000" fill="#fff" shape-rendering="auto"/><rect x="6" y="9" width="4" height="1" fill="#000"/><rect x="6" y="15" width="4" height="1" fill="#000"/><rect x="21" y="12" width="3" height="1" fill="#000"/></svg><svg width="31" height="30" viewBox="0 0 31 30" shape-rendering="crispEdges" fill="#3399ff"><rect x="11" y="22" width="9" height="1"/><rect x="12" y="23" width="7" height="1"/><rect x="13" y="24" width="5" height="1"/><rect x="14" y="25" width="3" height="1"/><rect x="15" y="26" width="1" height="1"/></svg></div><div class="btn" style="left:324px;top:91px"><svg width="31" height="30" viewBox="0 0 31 30" shape-rendering="crispEdges"><rect x="6" y="5" width="18" height="16" fill="#000"/><rect x="7" y="6" width="16" height="14" fill="#fff"/><rect x="3" y="9" width="3" height="1" fill="#000"/><rect x="3" y="16" width="3" height="1" fill="#000"/><rect x="24" y="9" width="3" height="1" fill="#000"/><rect x="24" y="16" width="3" height="1" fill="#000"/><rect x="10" y="7" width="3" height="1" fill="#000080"/><rect x="9" y="8" width="1" height="1" fill="#000080"/><rect x="10" y="9" width="2" height="1" fill="#000080"/><rect x="12" y="10" width="1" height="1" fill="#000080"/><rect x="9" y="11" width="3" height="1" fill="#000080"/><rect x="17" y="7" width="2" height="1" fill="#000080"/><rect x="16" y="8" width="1" height="1" fill="#000080"/><rect x="19" y="8" width="1" height="1" fill="#000080"/><rect x="16" y="9" width="1" height="1" fill="#000080"/><rect x="19" y="9" width="1" height="1" fill="#000080"/><rect x="16" y="10" width="1" height="1" fill="#000080"/><rect x="18" y="10" width="2" height="1" fill="#000080"/><rect x="17" y="11" width="3" height="1" fill="#000080"/><rect x="9" y="14" width="3" height="1" fill="#000080"/><rect x="9" y="15" width="1" height="1" fill="#000080"/><rect x="12" y="15" width="1" height="1" fill="#000080"/><rect x="9" y="16" width="3" height="1" fill="#000080"/><rect x="9" y="17" width="1" height="1" fill="#000080"/><rect x="11" y="17" width="1" height="1" fill="#000080"/><rect x="9" y="18" width="1" height="1" fill="#000080"/><rect x="12" y="18" width="1" height="1" fill="#000080"/><rect x="16" y="13" width="4" height="1" fill="#000080"/><rect x="17" y="14" width="2" height="1" fill="#000080"/><rect x="16" y="15" width="1" height="1" fill="#000080"/><rect x="19" y="15" width="1" height="1" fill="#000080"/><rect x="16" y="16" width="1" height="1" fill="#000080"/><rect x="19" y="16" width="1" height="1" fill="#000080"/><rect x="16" y="17" width="1" height="1" fill="#000080"/><rect x="18" y="17" width="2" height="1" fill="#000080"/><rect x="17" y="18" width="3" height="1" fill="#000080"/></svg><svg width="31" height="30" viewBox="0 0 31 30" shape-rendering="crispEdges" fill="#3399ff"><rect x="11" y="22" width="9" height="1"/><rect x="12" y="23" width="7" height="1"/><rect x="13" y="24" width="5" height="1"/><rect x="14" y="25" width="3" height="1"/><rect x="15" y="26" width="1" height="1"/></svg></div><div class="btn" style="left:363px;top:91px"><svg width="31" height="30" viewBox="0 0 31 30" shape-rendering="crispEdges"><rect x="8" y="3" width="15" height="15" fill="#000"/><rect x="9" y="4" width="13" height="13" fill="#fff"/><rect x="10" y="5" width="11" height="11" fill="#eaffff"/><rect x="13" y="5" width="5" height="1" fill="#f00"/><rect x="13" y="10" width="5" height="1" fill="#f00"/><rect x="13" y="15" width="5" height="1" fill="#f00"/><rect x="11" y="6" width="1" height="4" fill="#f00"/><rect x="19" y="6" width="1" height="4" fill="#f00"/><rect x="11" y="11" width="1" height="4" fill="#f00"/><rect x="19" y="11" width="1" height="4" fill="#f00"/><rect x="7" y="17" width="17" height="2" fill="#000"/><rect x="9" y="19" width="1" height="2" fill="#000"/><rect x="13" y="19" width="1" height="2" fill="#000"/><rect x="17" y="19" width="1" height="2" fill="#000"/><rect x="21" y="19" width="1" height="2" fill="#000"/></svg><svg width="31" height="30" viewBox="0 0 31 30" shape-rendering="crispEdges" fill="#3399ff"><rect x="11" y="22" width="9" height="1"/><rect x="12" y="23" width="7" height="1"/><rect x="13" y="24" width="5" height="1"/><rect x="14" y="25" width="3" height="1"/><rect x="15" y="26" width="1" height="1"/></svg></div><div class="btn" style="left:394px;top:91px"><svg width="31" height="30" viewBox="0 0 31 30" shape-rendering="crispEdges"><rect x="6" y="4" width="18" height="16" fill="#000"/><rect x="7" y="5" width="16" height="14" fill="#fff"/><rect x="8" y="6" width="14" height="12" fill="#f0f0f0"/><rect x="3" y="7" width="3" height="1" fill="#000"/><rect x="3" y="18" width="3" height="1" fill="#000"/><rect x="24" y="7" width="3" height="1" fill="#000"/><rect x="24" y="18" width="3" height="1" fill="#000"/><rect x="14" y="6" width="3" height="1" fill="#000080"/><rect x="13" y="7" width="2" height="10" fill="#000080"/><rect x="12" y="9" width="4" height="1" fill="#000080"/></svg><svg width="31" height="30" viewBox="0 0 31 30" shape-rendering="crispEdges" fill="#3399ff"><rect x="11" y="22" width="9" height="1"/><rect x="12" y="23" width="7" height="1"/><rect x="13" y="24" width="5" height="1"/><rect x="14" y="25" width="3" height="1"/><rect x="15" y="26" width="1" height="1"/></svg></div><div class="btn" style="left:425px;top:91px"><svg width="31" height="30" viewBox="0 0 31 30" shape-rendering="crispEdges"><rect x="8" y="5" width="5" height="1" fill="#000"/><rect x="18" y="5" width="5" height="1" fill="#000"/><rect x="8" y="6" width="6" height="1" fill="#000"/><rect x="17" y="6" width="6" height="1" fill="#000"/><rect x="8" y="7" width="6" height="1" fill="#000"/><rect x="17" y="7" width="6" height="1" fill="#000"/><rect x="8" y="8" width="3" height="1" fill="#000"/><rect x="12" y="8" width="2" height="1" fill="#000"/><rect x="17" y="8" width="2" height="1" fill="#000"/><rect x="20" y="8" width="3" height="1" fill="#000"/><rect x="8" y="9" width="3" height="1" fill="#000"/><rect x="12" y="9" width="2" height="1" fill="#000"/><rect x="17" y="9" width="2" height="1" fill="#000"/><rect x="20" y="9" width="3" height="1" fill="#000"/><rect x="8" y="10" width="3" height="1" fill="#000"/><rect x="12" y="10" width="2" height="1" fill="#000"/><rect x="17" y="10" width="2" height="1" fill="#000"/><rect x="20" y="10" width="3" height="1" fill="#000"/><rect x="8" y="11" width="3" height="1" fill="#000"/><rect x="13" y="11" width="2" height="1" fill="#000"/><rect x="16" y="11" width="2" height="1" fill="#000"/><rect x="20" y="11" width="3" height="1" fill="#000"/><rect x="8" y="12" width="3" height="1" fill="#000"/><rect x="13" y="12" width="2" height="1" fill="#000"/><rect x="16" y="12" width="2" height="1" fill="#000"/><rect x="20" y="12" width="3" height="1" fill="#000"/><rect x="8" y="13" width="3" height="1" fill="#000"/><rect x="13" y="13" width="2" height="1" fill="#000"/><rect x="16" y="13" width="2" height="1" fill="#000"/><rect x="20" y="13" width="3" height="1" fill="#000"/><rect x="8" y="14" width="3" height="1" fill="#000"/><rect x="13" y="14" width="2" height="1" fill="#000"/><rect x="16" y="14" width="2" height="1" fill="#000"/><rect x="20" y="14" width="3" height="1" fill="#000"/><rect x="8" y="15" width="3" height="1" fill="#000"/><rect x="14" y="15" width="3" height="1" fill="#000"/><rect x="20" y="15" width="3" height="1" fill="#000"/><rect x="8" y="16" width="3" height="1" fill="#000"/><rect x="14" y="16" width="3" height="1" fill="#000"/><rect x="20" y="16" width="3" height="1" fill="#000"/><rect x="8" y="17" width="3" height="1" fill="#000"/><rect x="14" y="17" width="3" height="1" fill="#000"/><rect x="20" y="17" width="3" height="1" fill="#000"/><rect x="8" y="18" width="3" height="1" fill="#000"/><rect x="14" y="18" width="3" height="1" fill="#000"/><rect x="20" y="18" width="3" height="1" fill="#000"/></svg><svg width="31" height="30" viewBox="0 0 31 30" shape-rendering="crispEdges" fill="#3399ff"><rect x="11" y="22" width="9" height="1"/><rect x="12" y="23" width="7" height="1"/><rect x="13" y="24" width="5" height="1"/><rect x="14" y="25" width="3" height="1"/><rect x="15" y="26" width="1" height="1"/></svg></div><div class="btn" style="left:464px;top:91px"><svg width="31" height="30" viewBox="0 0 31 30" shape-rendering="crispEdges"><rect x="5" y="6" width="19" height="14" fill="#000"/><rect x="6" y="7" width="17" height="12" fill="#fff"/><rect x="7" y="8" width="12" height="7" fill="#000"/><defs><pattern id="dyw" width="2" height="2" patternUnits="userSpaceOnUse"><rect width="2" height="2" fill="#fff"/><rect width="1" height="1" fill="#ff0"/><rect x="1" y="1" width="1" height="1" fill="#ff0"/></pattern></defs><rect x="8" y="9" width="10" height="5" fill="url(#dyw)"/><path d="M8 11.5L9.5 10L11.5 12.5L13.5 10L15.5 12.5L17.5 10" stroke="#3399ff" stroke-width="1" fill="none" shape-rendering="auto"/><rect x="21" y="10" width="1" height="1" fill="#000"/><rect x="21" y="13" width="1" height="1" fill="#000"/><rect x="9" y="16" width="2" height="2" fill="#000"/><rect x="15" y="16" width="2" height="2" fill="#000"/></svg><svg width="31" height="30" viewBox="0 0 31 30" shape-rendering="crispEdges" fill="#3399ff"><rect x="11" y="22" width="9" height="1"/><rect x="12" y="23" width="7" height="1"/><rect x="13" y="24" width="5" height="1"/><rect x="14" y="25" width="3" height="1"/><rect x="15" y="26" width="1" height="1"/></svg></div><div class="a" style="left:505px;top:57px;width:83px;height:24px;border:1px solid #646464;background:#fff"></div><svg class="a" style="left:507px;top:61px" width="30" height="13" shape-rendering="crispEdges" fill="#000"><rect x="3" y="2" width="4" height="1" fill="#000"/><rect x="11" y="2" width="4" height="1" fill="#000"/><rect x="18" y="2" width="3" height="1" fill="#000"/><rect x="26" y="2" width="2" height="1" fill="#000"/><rect x="2" y="3" width="2" height="1" fill="#000"/><rect x="6" y="3" width="2" height="1" fill="#000"/><rect x="10" y="3" width="2" height="1" fill="#000"/><rect x="14" y="3" width="2" height="1" fill="#000"/><rect x="17" y="3" width="2" height="1" fill="#000"/><rect x="20" y="3" width="2" height="1" fill="#000"/><rect x="25" y="3" width="2" height="1" fill="#000"/><rect x="2" y="4" width="2" height="1" fill="#000"/><rect x="6" y="4" width="2" height="1" fill="#000"/><rect x="10" y="4" width="2" height="1" fill="#000"/><rect x="14" y="4" width="2" height="1" fill="#000"/><rect x="17" y="4" width="2" height="1" fill="#000"/><rect x="20" y="4" width="2" height="1" fill="#000"/><rect x="24" y="4" width="2" height="1" fill="#000"/><rect x="2" y="5" width="2" height="1" fill="#000"/><rect x="6" y="5" width="2" height="1" fill="#000"/><rect x="10" y="5" width="2" height="1" fill="#000"/><rect x="14" y="5" width="2" height="1" fill="#000"/><rect x="17" y="5" width="2" height="1" fill="#000"/><rect x="20" y="5" width="2" height="1" fill="#000"/><rect x="23" y="5" width="2" height="1" fill="#000"/><rect x="3" y="6" width="4" height="1" fill="#000"/><rect x="10" y="6" width="2" height="1" fill="#000"/><rect x="14" y="6" width="2" height="1" fill="#000"/><rect x="18" y="6" width="3" height="1" fill="#000"/><rect x="22" y="6" width="2" height="1" fill="#000"/><rect x="2" y="7" width="2" height="1" fill="#000"/><rect x="6" y="7" width="2" height="1" fill="#000"/><rect x="10" y="7" width="2" height="1" fill="#000"/><rect x="14" y="7" width="2" height="1" fill="#000"/><rect x="21" y="7" width="2" height="1" fill="#000"/><rect x="24" y="7" width="3" height="1" fill="#000"/><rect x="2" y="8" width="2" height="1" fill="#000"/><rect x="6" y="8" width="2" height="1" fill="#000"/><rect x="10" y="8" width="2" height="1" fill="#000"/><rect x="14" y="8" width="2" height="1" fill="#000"/><rect x="20" y="8" width="2" height="1" fill="#000"/><rect x="23" y="8" width="2" height="1" fill="#000"/><rect x="26" y="8" width="2" height="1" fill="#000"/><rect x="2" y="9" width="2" height="1" fill="#000"/><rect x="6" y="9" width="2" height="1" fill="#000"/><rect x="10" y="9" width="2" height="1" fill="#000"/><rect x="14" y="9" width="2" height="1" fill="#000"/><rect x="19" y="9" width="2" height="1" fill="#000"/><rect x="23" y="9" width="2" height="1" fill="#000"/><rect x="26" y="9" width="2" height="1" fill="#000"/><rect x="2" y="10" width="2" height="1" fill="#000"/><rect x="6" y="10" width="2" height="1" fill="#000"/><rect x="10" y="10" width="2" height="1" fill="#000"/><rect x="14" y="10" width="2" height="1" fill="#000"/><rect x="18" y="10" width="2" height="1" fill="#000"/><rect x="23" y="10" width="2" height="1" fill="#000"/><rect x="26" y="10" width="2" height="1" fill="#000"/><rect x="3" y="11" width="4" height="1" fill="#000"/><rect x="11" y="11" width="4" height="1" fill="#000"/><rect x="17" y="11" width="2" height="1" fill="#000"/><rect x="24" y="11" width="3" height="1" fill="#000"/></svg><div class="a" style="left:569px;top:59px;width:17px;height:20px;background:#f0f0f0;border-top:1px solid #e3e3e3;border-left:1px solid #e3e3e3;border-right:1px solid #696969;border-bottom:1px solid #696969"></div><div class="a" style="left:570px;top:60px;width:15px;height:18px;border-top:1px solid #fff;border-left:1px solid #fff;border-right:1px solid #a0a0a0;border-bottom:1px solid #a0a0a0"></div><svg class="a" style="left:574px;top:67px" width="7" height="4" shape-rendering="crispEdges"><rect x="0" y="0" width="7" height="1"/><rect x="1" y="1" width="5" height="1"/><rect x="2" y="2" width="3" height="1"/><rect x="3" y="3" width="1" height="1"/></svg>
<!-- MDI child -->
<div class="a" style="left:111px;top:170px;width:722px;height:478px;background:#000;border-radius:5px 5px 0 0"></div>
<div class="a" style="left:112px;top:171px;width:720px;height:476px;background:#fff;border-radius:4px 4px 0 0"></div>
<div class="a" style="left:112px;top:171px;width:720px;height:476px;background:#5ce0ff;border-radius:4px 4px 0 0;clip-path:inset(4px 0 0 1px)"></div>
<div class="a" style="left:113px;top:172px;width:718px;height:474px;background:linear-gradient(180deg,#99b4d1 0px,#b9d1ea 29px,#b9d1ea 100%);border-radius:3px 3px 0 0"></div>
<div class="t" style="left:123px;top:182px;font-size:12.5px;line-height:16px;letter-spacing:0.3px">Untitled</div>
<div class="a" style="left:119px;top:201px;width:690px;height:423px;background:#fff"></div>
<!-- v scroll -->
<div class="a" style="left:809px;top:201px;width:16px;height:423px;background:#f0f0f0"></div>
<div class="a" style="left:809px;top:335px;width:15px;height:92px;background:#cdcdcd"></div>
<svg class="a" style="left:813px;top:207px" width="7" height="6" shape-rendering="crispEdges" fill="#606060"><rect x="3" y="0" width="1" height="1"/><rect x="2" y="1" width="1" height="1"/><rect x="3" y="1" width="1" height="1"/><rect x="4" y="1" width="1" height="1"/><rect x="1" y="2" width="1" height="1"/><rect x="2" y="2" width="1" height="1"/><rect x="3" y="2" width="1" height="1"/><rect x="4" y="2" width="1" height="1"/><rect x="5" y="2" width="1" height="1"/><rect x="0" y="3" width="1" height="1"/><rect x="1" y="3" width="1" height="1"/><rect x="2" y="3" width="1" height="1"/><rect x="4" y="3" width="1" height="1"/><rect x="5" y="3" width="1" height="1"/><rect x="6" y="3" width="1" height="1"/><rect x="0" y="4" width="1" height="1"/><rect x="1" y="4" width="1" height="1"/><rect x="5" y="4" width="1" height="1"/><rect x="6" y="4" width="1" height="1"/><rect x="0" y="5" width="1" height="1"/><rect x="6" y="5" width="1" height="1"/></svg>
<svg class="a" style="left:813px;top:612px" width="7" height="6" shape-rendering="crispEdges" fill="#606060"><rect x="3" y="5" width="1" height="1"/><rect x="2" y="4" width="1" height="1"/><rect x="3" y="4" width="1" height="1"/><rect x="4" y="4" width="1" height="1"/><rect x="1" y="3" width="1" height="1"/><rect x="2" y="3" width="1" height="1"/><rect x="3" y="3" width="1" height="1"/><rect x="4" y="3" width="1" height="1"/><rect x="5" y="3" width="1" height="1"/><rect x="0" y="2" width="1" height="1"/><rect x="1" y="2" width="1" height="1"/><rect x="2" y="2" width="1" height="1"/><rect x="4" y="2" width="1" height="1"/><rect x="5" y="2" width="1" height="1"/><rect x="6" y="2" width="1" height="1"/><rect x="0" y="1" width="1" height="1"/><rect x="1" y="1" width="1" height="1"/><rect x="5" y="1" width="1" height="1"/><rect x="6" y="1" width="1" height="1"/><rect x="0" y="0" width="1" height="1"/><rect x="6" y="0" width="1" height="1"/></svg>
<!-- h scroll -->
<div class="a" style="left:119px;top:624px;width:706px;height:16px;background:#f0f0f0"></div>
<div class="a" style="left:310px;top:624px;width:184px;height:15px;background:#cdcdcd"></div>
<svg class="a" style="left:124px;top:628px" width="6" height="7" shape-rendering="crispEdges" fill="#606060"><rect x="0" y="3" width="1" height="1"/><rect x="1" y="2" width="1" height="1"/><rect x="1" y="3" width="1" height="1"/><rect x="1" y="4" width="1" height="1"/><rect x="2" y="1" width="1" height="1"/><rect x="2" y="2" width="1" height="1"/><rect x="2" y="3" width="1" height="1"/><rect x="2" y="4" width="1" height="1"/><rect x="2" y="5" width="1" height="1"/><rect x="3" y="0" width="1" height="1"/><rect x="3" y="1" width="1" height="1"/><rect x="3" y="2" width="1" height="1"/><rect x="3" y="4" width="1" height="1"/><rect x="3" y="5" width="1" height="1"/><rect x="3" y="6" width="1" height="1"/><rect x="4" y="0" width="1" height="1"/><rect x="4" y="1" width="1" height="1"/><rect x="4" y="5" width="1" height="1"/><rect x="4" y="6" width="1" height="1"/><rect x="5" y="0" width="1" height="1"/><rect x="5" y="6" width="1" height="1"/></svg>
<svg class="a" style="left:797px;top:628px" width="6" height="7" shape-rendering="crispEdges" fill="#606060"><rect x="5" y="3" width="1" height="1"/><rect x="4" y="2" width="1" height="1"/><rect x="4" y="3" width="1" height="1"/><rect x="4" y="4" width="1" height="1"/><rect x="3" y="1" width="1" height="1"/><rect x="3" y="2" width="1" height="1"/><rect x="3" y="3" width="1" height="1"/><rect x="3" y="4" width="1" height="1"/><rect x="3" y="5" width="1" height="1"/><rect x="2" y="0" width="1" height="1"/><rect x="2" y="1" width="1" height="1"/><rect x="2" y="2" width="1" height="1"/><rect x="2" y="4" width="1" height="1"/><rect x="2" y="5" width="1" height="1"/><rect x="2" y="6" width="1" height="1"/><rect x="1" y="0" width="1" height="1"/><rect x="1" y="1" width="1" height="1"/><rect x="1" y="5" width="1" height="1"/><rect x="1" y="6" width="1" height="1"/><rect x="0" y="0" width="1" height="1"/><rect x="0" y="6" width="1" height="1"/></svg>
<svg class="a" style="left:814px;top:630px" width="8" height="8" shape-rendering="crispEdges" fill="#a8a8a8"><rect x="6" y="0" width="2" height="2"/><rect x="3" y="3" width="2" height="2"/><rect x="6" y="3" width="2" height="2"/><rect x="0" y="6" width="2" height="2"/><rect x="3" y="6" width="2" height="2"/><rect x="6" y="6" width="2" height="2"/></svg>
<!-- status bar -->
<div class="a" style="left:5px;top:676px;width:898px;height:2px;background:#fff"></div>
<div class="a" style="left:5px;top:678px;width:898px;height:24px;background:#f0f0f0"></div>
<div class="a" style="left:5px;top:678px;width:130px;height:24px;border-top:1px solid #a0a0a0;border-left:1px solid #a0a0a0;border-right:1px solid #fff;border-bottom:1px solid #fff"></div>
<div class="a" style="left:137px;top:678px;width:98px;height:24px;border-top:1px solid #a0a0a0;border-left:1px solid #a0a0a0;border-right:1px solid #fff;border-bottom:1px solid #fff"></div>
<div class="a" style="left:237px;top:678px;width:98px;height:24px;border-top:1px solid #a0a0a0;border-left:1px solid #a0a0a0;border-right:1px solid #fff;border-bottom:1px solid #fff"></div>
<div class="a" style="left:337px;top:678px;width:566px;height:24px;border-top:1px solid #a0a0a0;border-left:1px solid #a0a0a0;border-right:1px solid #fff;border-bottom:1px solid #fff"></div>
<div class="t" style="left:7px;top:683px;letter-spacing:0.5px">Ready</div>
<div class="t" style="left:238.5px;top:683px;letter-spacing:1.35px">Temp:</div><div class="t" style="left:282.5px;top:683px;letter-spacing:1px">27</div>
<svg class="a" style="left:886px;top:685px" width="16" height="16"><path d="M2.3 14.7L14.7 2.3M7.3 14.7L14.7 7.3M12.3 14.7L14.7 12.3" stroke="#fff" stroke-width="1.2"/><path d="M3.6 15.2L15.2 3.6M8.6 15.2L15.2 8.6M13.6 15.2L15.2 13.6" stroke="#999" stroke-width="1.45" stroke-linecap="round"/></svg>
</body></html>
